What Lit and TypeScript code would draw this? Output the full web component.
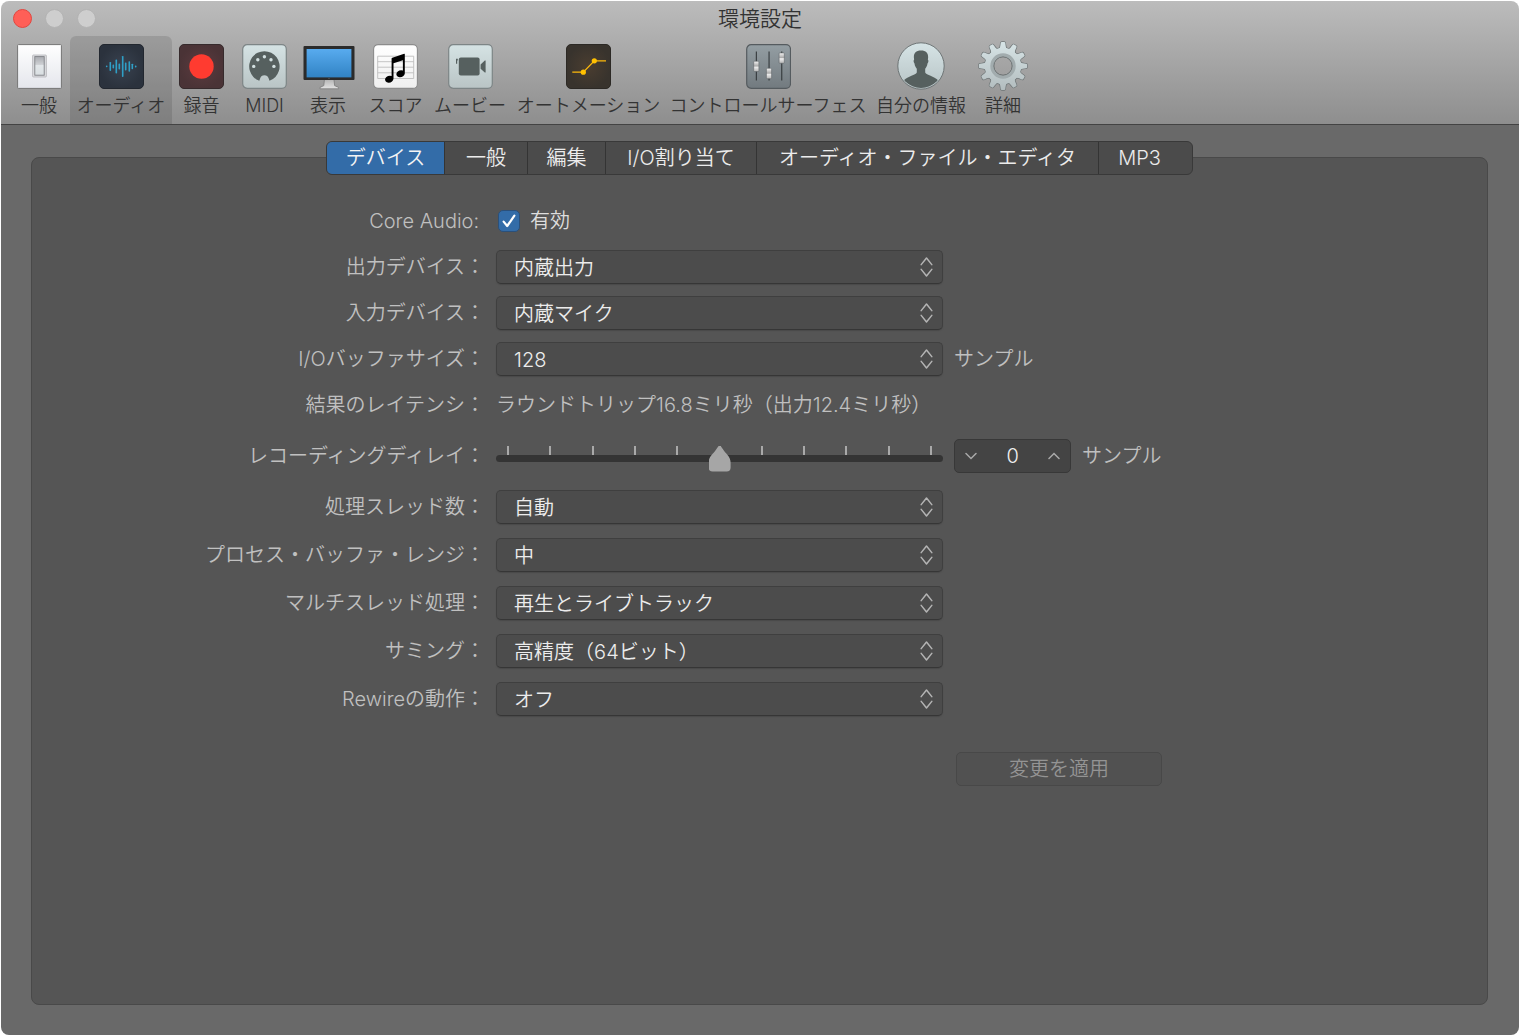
import { LitElement, html, svg, css, nothing, type TemplateResult } from "lit";
import { customElement, property, state } from "lit/decorators.js";
import { classMap } from "lit/directives/class-map.js";

/* ---------- toolbar icons ---------- */

const tile = (inner: unknown) => html`
  <svg width="45" height="45" viewBox="0 0 45 45" aria-hidden="true">${inner}</svg>
`;

const paleTile = svg`
  <defs>
    <linearGradient id="pale" x1="0" y1="0" x2="0" y2="1">
      <stop offset="0" stop-color="#d5e3e4" />
      <stop offset="1" stop-color="#b9c4c5" />
    </linearGradient>
  </defs>
  <rect x="0.7" y="0.7" width="43.6" height="43.6" rx="4.5" fill="url(#pale)" stroke="#7d8586" stroke-width="1.2" />
`;

const iconGeneral = tile(svg`
  <defs>
    <linearGradient id="plate" x1="0" y1="0" x2="0" y2="1">
      <stop offset="0" stop-color="#ffffff" />
      <stop offset="1" stop-color="#e4e6ec" />
    </linearGradient>
    <linearGradient id="rocker" x1="0" y1="0" x2="0" y2="1">
      <stop offset="0" stop-color="#a9abb0" />
      <stop offset="0.42" stop-color="#cdcfd3" />
      <stop offset="0.48" stop-color="#e3e7ea" />
      <stop offset="1" stop-color="#d9dfe2" />
    </linearGradient>
  </defs>
  <rect x="0.6" y="0.6" width="43.8" height="43.8" rx="0.8" fill="url(#plate)" stroke="#757575" stroke-width="1" />
  <rect x="15.6" y="11" width="13.8" height="22" rx="0.8" fill="#dcdde0" stroke="#adaeb2" stroke-width="0.7" />
  <rect x="17.8" y="12.6" width="9.4" height="18.6" fill="url(#rocker)" stroke="#808287" stroke-width="0.9" />
`);

const waveform: Array<[number, number]> = [
  [7.7, 1.6], [11.3, 9], [14.3, 4], [17.3, 14], [20.3, 6],
  [23.7, 21], [26.7, 8], [30.3, 10.5], [33.3, 5.5], [36.7, 2],
];

const iconAudio = tile(svg`
  <defs>
    <radialGradient id="navy">
      <stop offset="0" stop-color="#394250" />
      <stop offset="1" stop-color="#2b323d" />
    </radialGradient>
  </defs>
  <rect x="0.5" y="0.5" width="44" height="44" rx="4.5" fill="url(#navy)" stroke="#22272f" stroke-width="1" />
  ${waveform.map(([x, h]) => svg`
    <rect x=${x - 0.8} y=${22.4 - h / 2} width="1.6" height=${h} rx="0.7" fill="#2f9fc6" />`)}
`);

const iconRecord = tile(svg`
  <defs>
    <radialGradient id="maroon">
      <stop offset="0" stop-color="#5d3b3f" />
      <stop offset="1" stop-color="#4a3336" />
    </radialGradient>
  </defs>
  <rect x="0.5" y="0.5" width="44" height="44" rx="4.5" fill="url(#maroon)" stroke="#362a2c" stroke-width="1" />
  <circle cx="22.5" cy="22.5" r="12.2" fill="#ff3b30" />
`);

const iconMidi = tile(svg`
  ${paleTile}
  <path fill="#56605f" d="M17.3 36.7 A15.2 15.2 0 1 1 27.5 36.7 L26.6 34.2 C26 32.4 24.6 31.2 22.4 31.2 C20.2 31.2 18.8 32.4 18.2 34.2 Z" />
  <g fill="#d3e0e1">
    <circle cx="11.7" cy="22.4" r="1.7" /><circle cx="15.8" cy="15.8" r="1.7" />
    <circle cx="22.4" cy="12.8" r="1.7" /><circle cx="29" cy="15.8" r="1.7" />
    <circle cx="31.9" cy="22.4" r="1.7" />
  </g>
`);

const iconDisplay = html`
  <svg width="54" height="50" viewBox="-2 0 54 50" aria-hidden="true">
    <defs>
      <linearGradient id="screen" x1="0" y1="0" x2="0" y2="1">
        <stop offset="0" stop-color="#58abef" />
        <stop offset="1" stop-color="#3183c4" />
      </linearGradient>
      <linearGradient id="stand" x1="0" y1="0" x2="0" y2="1">
        <stop offset="0" stop-color="#b5b5b5" />
        <stop offset="1" stop-color="#e2e2e2" />
      </linearGradient>
    </defs>
    <path d="M21.400 38.500 H31 L31.600 44.600 L35.600 46.400 V47.800 H17 V46.400 L20.800 44.600 Z" fill="url(#stand)" stroke="#7a7a7a" stroke-width="0.8" />
    <rect x="0.5" y="5" width="51" height="34" rx="1" fill="#2b2b2b" />
    <rect x="3.6" y="8" width="44.8" height="28.4" fill="url(#screen)" />
    <circle cx="26" cy="37.6" r="0.5" fill="#777" />
  </svg>
`;

const iconScore = tile(svg`
  <defs>
    <linearGradient id="paper" x1="0" y1="0" x2="0" y2="1">
      <stop offset="0" stop-color="#ffffff" />
      <stop offset="1" stop-color="#efefef" />
    </linearGradient>
  </defs>
  <rect x="0.6" y="0.6" width="43.8" height="43.8" rx="4.5" fill="url(#paper)" stroke="#8c8c8c" stroke-width="1.1" />
  <path fill="none" stroke="#bdbdbd" stroke-width="0.9" d="M4.7 12.2 H40.7 V34.5 H4.7 Z M4.7 17.7 H40.7 M4.7 23.2 H40.7 M4.7 28.8 H40.7" />
  <path fill="#000" d="M18.6 14.6 Q18.7 14 19.4 13.8 L31.2 9.7 Q31.8 9.6 31.8 10.2 V29.5 A4.3 3.4 -18 1 1 29.9 26.6 V16.2 L20.5 19.3 V34.6 A4.3 3.4 -18 1 1 18.6 32 Z" />
`);

const iconMovie = tile(svg`
  ${paleTile}
  <g fill="#56605f">
    <rect x="10.8" y="13.4" width="20.8" height="18" rx="2" />
    <path d="M32.6 20.4 L36.8 16.4 H37.6 V28.6 H36.8 L32.6 24.8 Z" />
    <path d="M9.8 14.8 V16.6 H9.2 V19.8 H8 V14.8 Z" />
  </g>
`);

const iconAutomation = tile(svg`
  <defs>
    <radialGradient id="brown">
      <stop offset="0" stop-color="#4a3d30" />
      <stop offset="1" stop-color="#38332d" />
    </radialGradient>
  </defs>
  <rect x="0.5" y="0.5" width="44" height="44" rx="4.5" fill="url(#brown)" stroke="#2c2925" stroke-width="1" />
  <path fill="none" stroke="#fdb90b" stroke-width="1.3" d="M6.3 28.2 H17.3 L28.3 16.8 H40" />
  <circle cx="17.3" cy="28.2" r="2.6" fill="#ffc000" />
  <circle cx="28.3" cy="16.8" r="2.6" fill="#ffc000" />
`);

const faders: Array<[number, number]> = [[10.3, 17.2], [23, 24.3], [35.7, 8.9]];

const iconSurfaces = tile(svg`
  <defs>
    <linearGradient id="steel" x1="0" y1="0" x2="0" y2="1">
      <stop offset="0" stop-color="#949ea3" />
      <stop offset="1" stop-color="#727a7f" />
    </linearGradient>
    <linearGradient id="cap" x1="0" y1="0" x2="0" y2="1">
      <stop offset="0" stop-color="#f4f4f4" />
      <stop offset="0.48" stop-color="#a8a8a8" />
      <stop offset="0.55" stop-color="#f0f0f0" />
      <stop offset="1" stop-color="#b4b4b4" />
    </linearGradient>
  </defs>
  <rect x="0.7" y="0.7" width="43.8" height="43.6" rx="4.5" fill="url(#steel)" stroke="#555b5f" stroke-width="1.2" />
  ${faders.map(([x, y]) => svg`
    <rect x=${x - 0.5} y="7.5" width="1.1" height="29" fill="#33383b" />
    <rect x=${x - 2.6} y=${y} width="5.2" height="10.4" rx="0.8" fill="url(#cap)" stroke="#62676a" stroke-width="0.6" />`)}
`);

const iconProfile = html`
  <svg width="48" height="48" viewBox="0 0 48 48" aria-hidden="true">
    <defs>
      <linearGradient id="disc" x1="0" y1="0" x2="0" y2="1">
        <stop offset="0" stop-color="#d6e4e6" />
        <stop offset="1" stop-color="#b7c3c5" />
      </linearGradient>
      <clipPath id="round"><circle cx="24" cy="24" r="22" /></clipPath>
    </defs>
    <circle cx="24" cy="24" r="23.2" fill="url(#disc)" stroke="#6d7475" stroke-width="1" />
    <path clip-path="url(#round)" fill="#56605f" d="M24 8.6 C29.4 8.6 31.4 11.6 31.1 15.8 L30.9 18 C31.8 18.2 31.5 20.4 30.5 21.6 C30.2 24 29.2 25.4 28.2 26.8 V30.6 C29.4 33.6 37 33.8 41.4 38.6 V48 H6.6 V38.6 C11 33.8 18.6 33.6 19.8 30.6 V26.8 C18.8 25.4 17.8 24 17.5 21.6 C16.5 20.4 16.2 18.2 17.1 18 L16.9 15.8 C16.6 11.6 18.6 8.6 24 8.6 Z" />
  </svg>
`;

const teeth = Array.from({ length: 12 }, (_, i) => i * 30);
const gearShape = svg`
  <circle cx="25" cy="25" r="18.2" />
  ${teeth.map((a) => svg`
    <path d="M21 8 C22.4 6.8 22.4 4 22.7 2 Q22.9 0.9 23.8 0.9 H26.2 Q27.1 0.9 27.3 2 C27.6 4 27.6 6.8 29 8 Z" transform="rotate(${a} 25 25)" />`)}
`;

const iconAdvanced = html`
  <svg width="50" height="50" viewBox="0 0 50 50" aria-hidden="true">
    <defs>
      <linearGradient id="alloy" gradientUnits="userSpaceOnUse" x1="0" y1="0" x2="0" y2="50">
        <stop offset="0" stop-color="#d8e5e7" />
        <stop offset="1" stop-color="#b2bcbe" />
      </linearGradient>
      <mask id="bore">
        <rect width="50" height="50" fill="#fff" />
        <circle cx="25" cy="25" r="9.2" fill="#000" />
      </mask>
      <mask id="cog">
        <g fill="#fff">${gearShape}</g>
      </mask>
    </defs>
    <g mask="url(#bore)">
      <g fill="#6f7677" stroke="#6f7677" stroke-width="1.3">${gearShape}</g>
      <rect width="50" height="50" fill="url(#alloy)" mask="url(#cog)" />
      <circle cx="25" cy="25" r="11.2" fill="none" stroke="#a2acae" stroke-width="3" />
    </g>
    <circle cx="25" cy="25" r="9.2" fill="none" stroke="#666c6d" stroke-width="1" />
  </svg>
`;

interface ToolbarItem { label: string; icon: TemplateResult }

const toolbar: ToolbarItem[] = [
  { label: "一般", icon: iconGeneral },
  { label: "オーディオ", icon: iconAudio },
  { label: "録音", icon: iconRecord },
  { label: "MIDI", icon: iconMidi },
  { label: "表示", icon: iconDisplay },
  { label: "スコア", icon: iconScore },
  { label: "ムービー", icon: iconMovie },
  { label: "オートメーション", icon: iconAutomation },
  { label: "コントロールサーフェス", icon: iconSurfaces },
  { label: "自分の情報", icon: iconProfile },
  { label: "詳細", icon: iconAdvanced },
];

const tabs = ["デバイス", "一般", "編集", "I/O割り当て", "オーディオ・ファイル・エディタ", "MP3"];

/* ---------- pop-up menu ---------- */

@customElement("pref-popup")
export class PrefPopup extends LitElement {
  @property() label = "";
  @property() value = "";
  @property() suffix = "";

  static styles = css`
    :host { display: contents; }
    * { box-sizing: border-box; }
    label { grid-column: 1; text-align: right; color: #c0c0c0; white-space: nowrap; }
    .box { grid-column: 2; display: grid; align-items: center; }
    select, svg { grid-area: 1 / 1; }
    select {
      appearance: none;
      width: 100%;
      height: 34px;
      padding: 0 40px 0 17px;
      border: 1px solid #3f3f3f;
      border-bottom-color: #363636;
      border-radius: 5px;
      background: #4c4c4c;
      box-shadow: 0 1px 1px #4a4a4a;
      color: #ececec;
      font: inherit;
    }
    svg { justify-self: end; margin-right: 10px; pointer-events: none; }
    .suffix { grid-column: 3; color: #c0c0c0; }
  `;

  render() {
    return html`
      <label for="menu">${this.label}</label>
      <div class="box">
        <select id="menu"><option>${this.value}</option></select>
        <svg width="13" height="20" viewBox="0 0 13 20" aria-hidden="true">
          <path d="M1.2 7.6 L6.5 1 L11.8 7.6 M1.2 12.4 L6.5 19 L11.8 12.4" fill="none" stroke="#b4b4b4" stroke-width="1.5" stroke-linecap="round" stroke-linejoin="round" />
        </svg>
      </div>
      ${this.suffix ? html`<span class="suffix">${this.suffix}</span>` : nothing}
    `;
  }
}

/* ---------- preferences window ---------- */

@customElement("app-root")
export class AppRoot extends LitElement {
  @state() private section = "オーディオ";
  @state() private tab = "デバイス";
  @state() private delay = 0;

  static styles = css`
    :host {
      display: block;
      background: #fff;
      font: 350 20px/34px Inter, "Noto Sans CJK JP", sans-serif;
    }
    * { box-sizing: border-box; }
    button, input { font: inherit; margin: 0; }
    .window {
      display: flex;
      flex-direction: column;
      min-height: 100vh;
      padding: 1px 0 0 1px;
      border-radius: 8px;
    }
    header {
      border-bottom: 1px solid #434343;
      border-radius: 8px 8px 0 0;
      background: linear-gradient(#bcbcbc, #8e8e8e);
      color: #333;
    }
    .titlebar {
      display: grid;
      grid-template-columns: 1fr auto 1fr;
      align-items: center;
      height: 35px;
      padding: 0 12px;
    }
    .lights { display: flex; gap: 13px; }
    .light {
      width: 19px;
      height: 19px;
      padding: 0;
      border: 1px solid #b3b3b3;
      border-radius: 50%;
      background: #cecece;
    }
    .light.close { border-color: #e2463f; background: #ff5f57; }
    h1 { margin: 0; font-size: 21px; font-weight: 350; line-height: 34px; }
    .toolbar {
      display: grid;
      grid-template-columns: 62px 102px 59px 67px 60px 75px 74px 163px 196px 110px 54px;
      padding-left: 7px;
    }
    .tool {
      display: flex;
      flex-direction: column;
      align-items: center;
      height: 88px;
      padding: 5px 0 0;
      border: 0;
      border-radius: 6px 6px 0 0;
      background: none;
      color: inherit;
      font-size: 18px;
      line-height: 30px;
      white-space: nowrap;
    }
    .tool.selected { background: rgb(0 0 0 / 11%); }
    .glyph { display: flex; align-items: center; height: 50px; }
    .body {
      display: flex;
      flex: 1;
      flex-direction: column;
      padding: 16px 31px 30px 30px;
      border-radius: 0 0 8px 8px;
      background: #696969;
    }
    .tabs {
      display: grid;
      grid-template-columns: 117px 83px 78px 151px 342px 94px;
      align-self: center;
      z-index: 1;
      margin-bottom: -18px;
      overflow: hidden;
      border: 1px solid #393939;
      border-radius: 6px;
      background: #4b4b4b;
    }
    .tab {
      height: 32px;
      padding: 0;
      border: 0;
      border-left: 1px solid #343434;
      background: none;
      color: #ececec;
      line-height: 32px;
      white-space: nowrap;
    }
    .tab:first-child { border-left: 0; }
    .tab:last-child { padding-right: 12px; }
    .tab.selected { background: #336ca8; color: #f4f4f4; }
    .panel {
      flex: 1;
      padding: 46px 0 48px 3px;
      border: 1px solid #494949;
      border-radius: 8px;
      background: #555;
    }
    .group {
      display: grid;
      grid-template-columns: minmax(180px, 31%) minmax(200px, 447px) 1fr;
      column-gap: 11px;
      align-items: center;
      margin-bottom: 17px;
    }
    .io { row-gap: 12px; }
    .processing { row-gap: 14px; margin-bottom: 36px; }
    .name { grid-column: 1; text-align: right; color: #c0c0c0; white-space: nowrap; }
    .name.narrow { padding-right: 6px; }
    .check { display: flex; align-items: center; gap: 10px; padding-left: 2px; color: #dedede; }
    .check input {
      appearance: none;
      display: grid;
      width: 22px;
      height: 22px;
      border: 1px solid #2b507a;
      border-radius: 5px;
      background: #336ca8;
    }
    .mark { display: grid; align-items: center; justify-items: center; }
    .mark > * { grid-area: 1 / 1; }
    .mark svg { pointer-events: none; }
    .value { color: #c0c0c0; white-space: nowrap; }
    .slider { display: grid; height: 34px; padding-top: 7px; }
    .slider > * { grid-area: 1 / 1; }
    .ticks { display: flex; justify-content: space-between; height: 9px; padding: 0 11px; }
    .ticks i { width: 2px; background: #a9a9a9; }
    .slider input { appearance: none; width: 100%; height: 26px; background: none; }
    .slider input::-webkit-slider-runnable-track {
      height: 7px;
      margin-top: -2px;
      border-radius: 4px;
      background: #343434;
    }
    .slider input::-webkit-slider-thumb {
      appearance: none;
      width: 22px;
      height: 26px;
      margin-top: -9px;
      background: #a6a6a6;
      clip-path: path("M11 0 C12 0 13 2 14.5 4 C17 8 22 11 22 17 V22 Q22 26 18 26 H4 Q0 26 0 22 V17 C0 11 5 8 7.5 4 C9 2 10 0 11 0 Z");
    }
    .after { display: flex; align-items: center; gap: 11px; color: #c0c0c0; white-space: nowrap; }
    .stepper {
      display: flex;
      align-items: center;
      justify-content: space-between;
      width: 117px;
      height: 34px;
      border: 1px solid #383838;
      border-radius: 5px;
      background: #444;
    }
    .stepper button { display: flex; align-items: center; height: 32px; padding: 0 10px; border: 0; background: none; }
    .stepper input {
      width: 40px;
      padding: 0;
      border: 0;
      background: none;
      color: #f0f0f0;
      text-align: center;
    }
    .apply {
      grid-column: 3;
      width: 206px;
      height: 34px;
      margin-left: 2px;
      padding: 0;
      border: 1px solid #484848;
      border-radius: 5px;
      background: #515151;
      color: #949494;
      line-height: 32px;
    }
  `;

  private step(by: number) {
    this.delay += by;
  }

  render() {
    return html`
      <main class="window">
        <header>
          <div class="titlebar">
            <div class="lights">
              <button class="light close" aria-label="閉じる"></button>
              <button class="light" aria-label="しまう"></button>
              <button class="light" aria-label="拡大"></button>
            </div>
            <h1>環境設定</h1>
          </div>
          <nav class="toolbar">
            ${toolbar.map((item) => html`
              <button
                class=${classMap({ tool: true, selected: item.label === this.section })}
                @click=${() => (this.section = item.label)}
              ><span class="glyph">${item.icon}</span><span>${item.label}</span></button>`)}
          </nav>
        </header>
        <div class="body">
          <div class="tabs" role="tablist">
            ${tabs.map((name) => html`
              <button
                role="tab"
                aria-selected=${name === this.tab}
                class=${classMap({ tab: true, selected: name === this.tab })}
                @click=${() => (this.tab = name)}
              >${name}</button>`)}
          </div>
          <section class="panel" role="tabpanel">
            <div class="group io">
              <span class="name narrow">Core Audio:</span>
              <label class="check">
                <span class="mark">
                  <input type="checkbox" checked />
                  <svg width="16" height="16" viewBox="0 0 16 16" aria-hidden="true">
                    <path d="M2.6 8.6 L6.2 13 L13.4 2.6" fill="none" stroke="#fff" stroke-width="2.2" stroke-linecap="round" stroke-linejoin="round" />
                  </svg>
                </span>
                有効
              </label>
              <pref-popup label="出力デバイス：" value="内蔵出力"></pref-popup>
              <pref-popup label="入力デバイス：" value="内蔵マイク"></pref-popup>
              <pref-popup label="I/Oバッファサイズ：" value="128" suffix="サンプル"></pref-popup>
              <span class="name">結果のレイテンシ：</span>
              <span class="value">ラウンドトリップ16.8ミリ秒（出力12.4ミリ秒）</span>
            </div>
            <div class="group">
              <label class="name" for="delay">レコーディングディレイ：</label>
              <div class="slider">
                <div class="ticks">${Array.from({ length: 11 }, () => html`<i></i>`)}</div>
                <input
                  id="delay" type="range" min="-5000" max="5000" .value=${String(this.delay)}
                  @input=${(e: Event) => (this.delay = Number((e.target as HTMLInputElement).value))}
                />
              </div>
              <div class="after">
                <div class="stepper">
                  <button aria-label="減らす" @click=${() => this.step(-1)}>
                    <svg width="12" height="8" viewBox="0 0 12 8"><path d="M1 1.5 L6 6.5 L11 1.5" fill="none" stroke="#a9a9a9" stroke-width="1.5" stroke-linecap="round" /></svg>
                  </button>
                  <input type="text" aria-label="レコーディングディレイ" .value=${String(this.delay)} />
                  <button aria-label="増やす" @click=${() => this.step(1)}>
                    <svg width="12" height="8" viewBox="0 0 12 8"><path d="M1 6.5 L6 1.5 L11 6.5" fill="none" stroke="#a9a9a9" stroke-width="1.5" stroke-linecap="round" /></svg>
                  </button>
                </div>
                サンプル
              </div>
            </div>
            <div class="group processing">
              <pref-popup label="処理スレッド数：" value="自動"></pref-popup>
              <pref-popup label="プロセス・バッファ・レンジ：" value="中"></pref-popup>
              <pref-popup label="マルチスレッド処理：" value="再生とライブトラック"></pref-popup>
              <pref-popup label="サミング：" value="高精度（64ビット）"></pref-popup>
              <pref-popup label="Rewireの動作：" value="オフ"></pref-popup>
            </div>
            <div class="group">
              <button class="apply" disabled>変更を適用</button>
            </div>
          </section>
        </div>
      </main>
    `;
  }
}
